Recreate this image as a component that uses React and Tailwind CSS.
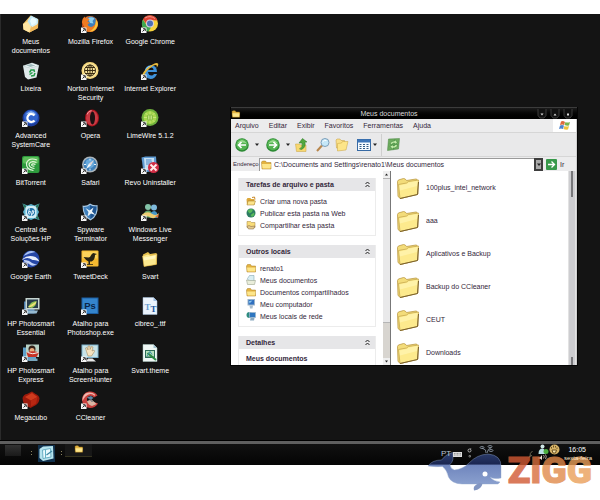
const Arrow = () => (
  <g>
    <rect x="0" y="25" width="11" height="11" fill="#f4f4f4" />
    <path d="M3 33 L7 29 M4 27.5 H8.5 V32" fill="none" stroke="#111" strokeWidth="1.8" />
  </g>
);

const FolderShape = () => (
  <>
    <path d="M4 9 L14 4 L18 8 L31 6 L32 29 L6 33 Z" fill="#e9c24c" />
    <path d="M3 12 L14 8 L19 11 L32 8 L30 29 L6 33 Z" fill="#fce98f" stroke="#d6ab3c" strokeWidth="1" />
    <path d="M5 15 L29 11 L28 17 L6 21 Z" fill="#fff6bd" />
  </>
);

const drawings = {
  docs: (
    <>
      <path d="M2 18 L17 1 L33 9 L32 26 L15 35 L3 29 Z" fill="#f5c766" />
      <path d="M11 12 L18 1 L32 8 L32 22 L20 32 L14 24 Z" fill="#bfe6f5" />
      <path d="M16 12 L20 5 L29 9 L29 19 L20 23 Z" fill="#e9fafd" />
      <path d="M2 18 L11 13 L18 23 L15 35 L3 29 Z" fill="#ffe6a2" />
      <path d="M18 23 L32 17 L32 26 L15 35 Z" fill="#f2b95a" />
      <path d="M20 21 L30 15 L30 19 L19 25 Z" fill="#d4eef3" />
    </>
  ),
  firefox: (
    <>
      <circle cx="18" cy="18" r="16" fill="#e8742a" />
      <circle cx="20" cy="14" r="11" fill="#3d7fbd" />
      <path d="M14 7 Q20 2 27 7 L23 12 L25 17 L18 16 Z" fill="#8fd0ee" />
      <path d="M2 14 Q3 6 7 3 L9 8 Q14 5 17 9 L13 13 L18 16 Q12 18 14 21 Q20 27 27 20 Q31 15 29 7 Q37 17 31 27 Q24 36 13 33 Q1 28 2 14 Z" fill="#ef7b22" />
      <path d="M30 9 Q37 18 30 27 Q25 34 17 33 Q28 28 29 18 Z" fill="#fbc73b" />
      <path d="M3 15 Q5 27 14 31 Q5 30 2 19 Z" fill="#b53c17" />
    </>
  ),
  chrome: (
    <>
      <circle cx="18" cy="17" r="16" fill="#f7d33c" />
      <path d="M4 9 A16 16 0 0 1 33 11 L18 10 L11 18 Z" fill="#dc4234" />
      <path d="M4 9 L12 22 L20 25 L15 33 A16 16 0 0 1 4 9 Z" fill="#3fa650" />
      <circle cx="18" cy="17" r="8" fill="#d9cfe0" />
      <circle cx="18" cy="17" r="6" fill="#4d6fb4" />
      <path d="M8 6 Q18 0 28 7" stroke="#f39a8c" strokeWidth="2" fill="none" />
    </>
  ),
  bin: (
    <>
      <path d="M2 8 L20 2 L34 7 L29 31 L12 35 L6 30 Z" fill="#dfe9ea" />
      <path d="M2 8 L20 2 L34 7 L17 12 Z" fill="#f8ffff" stroke="#a6babd" strokeWidth="1" />
      <path d="M8 7 L18 4 L27 7 L17 10 Z" fill="#9fb9bb" />
      <path d="M15 21 L18 16 L24 16 L25 20 M26 22 L24 27 L18 28 M15 25 L21 21" stroke="#239a48" strokeWidth="3" fill="none" />
    </>
  ),
  norton: (
    <>
      <circle cx="18" cy="17" r="17" fill="#f5d77d" />
      <circle cx="18" cy="17" r="14" fill="#fbe7a0" />
      <g fill="none" stroke="#3a2c12" strokeWidth="2">
        <circle cx="18" cy="17" r="11" />
        <ellipse cx="18" cy="17" rx="5" ry="11" />
        <path d="M18 6 V28 M7 17 H29 M9 11 H27 M9 23 H27" />
      </g>
    </>
  ),
  ie: (
    <>
      <path d="M32 20 H14 Q15 27 21 27 Q24 27 26 24 H32 Q28 34 19 34 Q7 32 7 20 Q8 7 20 6 Q32 7 32 20 Z M14 16 H25 Q25 11 20 11 Q15 11 14 16 Z" fill="#3f93dc" fillRule="evenodd" />
      <path d="M10 15 Q13 8 22 8" stroke="#a8dcfb" strokeWidth="2" fill="none" />
      <path d="M4 30 Q-1 24 13 12 Q30 -1 34 3 Q36 6 31 12 Q33 6 29 6 Q22 7 11 19 Q5 26 8 30 Z" fill="#e7b93c" />
    </>
  ),
  asc: (
    <>
      <circle cx="18" cy="18" r="17" fill="#1c3d9d" />
      <circle cx="18" cy="16" r="14" fill="#3264cd" />
      <path d="M7 11 Q18 -3 29 11 Q18 8 7 11 Z" fill="#86aeee" />
      <path d="M25 13 A8 8 0 1 0 25 23" stroke="#fff" strokeWidth="4.5" fill="none" />
    </>
  ),
  opera: (
    <>
      <ellipse cx="22" cy="18" rx="14" ry="17" fill="#a80f1a" />
      <ellipse cx="22" cy="18" rx="12" ry="15" fill="#c93b44" />
      <ellipse cx="23" cy="18" rx="5" ry="13" fill="#1b1112" />
      <path d="M12 11 Q14 4 21 3" stroke="#f5a0a4" strokeWidth="2" fill="none" />
    </>
  ),
  lime: (
    <>
      <circle cx="18" cy="17" r="17" fill="#6fb03d" />
      <circle cx="18" cy="17" r="13" fill="#a6d64d" />
      <g stroke="#c8e67c" strokeWidth="2">
        <path d="M18 5 V29 M6 17 H30 M9 8 L27 26 M27 8 L9 26" />
      </g>
      <rect x="12" y="11" width="12" height="12" rx="3" fill="#86bd42" />
      <path d="M15 13 V21 M18 13 V21 M21 13 V21" stroke="#e4f5a8" strokeWidth="1.2" />
    </>
  ),
  bittorrent: (
    <>
      <rect x="0" y="0" width="35" height="34" rx="4" fill="#2d9b3d" />
      <rect x="2" y="2" width="31" height="13" rx="3" fill="#5cbd59" />
      <path d="M30 8 Q14 2 9 14 Q8 27 23 29 M29 13 Q18 8 14 16 Q14 24 25 25 M27 17 Q21 14 19 18 Q21 21 25 20" stroke="#e6f8de" strokeWidth="2.4" fill="none" />
    </>
  ),
  safari: (
    <>
      <circle cx="18" cy="17" r="16" fill="#aab4bb" />
      <circle cx="18" cy="17" r="13" fill="#3d7fb9" />
      <circle cx="18" cy="15" r="9" fill="#68a9dc" />
      <path d="M18 5 V9 M18 25 V29 M6 17 H10 M26 17 H30" stroke="#e3f1fb" strokeWidth="2" />
      <path d="M26 8 L20 19 L16 15 Z" fill="#e0d5d8" />
      <path d="M10 26 L16 15 L20 19 Z" fill="#f2f6f8" />
    </>
  ),
  revo: (
    <>
      <path d="M1 3 L9 1 H30 L32 29 L5 33 Z" fill="#5f9bd3" />
      <path d="M6 4 H26 V28 H8 Z" fill="#c5e0f4" />
      <path d="M10 8 H21 M10 12 H22 M10 16 H18" stroke="#4a87c4" strokeWidth="2" />
      <circle cx="25" cy="23" r="11" fill="#d12d45" />
      <path d="M19 17 L31 29 M31 17 L19 29" stroke="#ffe9e9" strokeWidth="4" />
    </>
  ),
  hp: (
    <>
      <path d="M1 1 L11 5 L18 2 L25 5 L35 1 L31 12 L34 18 L31 24 L35 34 L25 31 L18 34 L11 31 L1 34 L5 24 L2 18 L5 12 Z" fill="#5fb5cf" />
      <path d="M1 1 L9 6 L6 12 Z M35 1 L27 6 L30 12 Z M35 34 L27 30 L30 24 Z" fill="#2c755a" />
      <rect x="7" y="6" width="22" height="24" rx="5" fill="#d0edf6" />
      <circle cx="18" cy="18" r="8" fill="#1c6fa6" />
      <path d="M15 11 L12 23 M14 17 H17 L15 23 M21 15 L18 27 M20 16 H24 L22 22 H19" stroke="#eef9ff" strokeWidth="1.8" fill="none" />
    </>
  ),
  spyware: (
    <>
      <path d="M3 5 Q11 7 18 1 Q25 6 33 4 Q36 26 19 35 Q3 28 3 5 Z" fill="#a9c8e2" />
      <path d="M5 8 Q12 9 18 4 Q24 8 31 7 Q32 24 19 32 Q6 26 5 8 Z" fill="#3f80bd" />
      <path d="M18 4 Q24 8 31 7 Q32 24 19 32 Z" fill="#1f5591" />
      <path d="M9 10 L17 15 L25 9 L22 17 L29 24 L20 21 L13 27 L15 18 Z" fill="#eef6fb" />
    </>
  ),
  messenger: (
    <>
      <circle cx="14" cy="8" r="6" fill="#83c3a7" />
      <circle cx="26" cy="9" r="6" fill="#7eb9dc" />
      <path d="M5 28 Q5 14 15 15 Q23 15 23 30 Z" fill="#5fa26a" />
      <path d="M17 29 Q18 16 27 16 Q34 17 33 30 Z" fill="#4595c6" />
      <path d="M2 23 Q12 15 21 21 Q29 27 36 20 Q30 34 19 29 Q11 24 4 30 Z" fill="#eecd74" />
      <path d="M28 26 Q34 25 36 21 L34 30 Z" fill="#dc713d" />
    </>
  ),
  earth: (
    <>
      <circle cx="18" cy="18" r="17" fill="#2647a7" />
      <path d="M3 12 Q13 -2 27 4 Q14 6 3 12 Z" fill="#a9c2f4" />
      <path d="M1 18 Q12 8 27 14 Q33 18 35 23 Q28 19 21 20 Q10 12 1 20 Z" fill="#eaf0fd" />
      <path d="M4 20 Q14 20 20 26 Q27 30 32 27 Q22 35 14 28 Q9 23 4 23 Z" fill="#c3d3f7" />
    </>
  ),
  tweetdeck: (
    <>
      <rect x="1" y="1" width="34" height="32" rx="2" fill="#f4b931" />
      <rect x="3" y="3" width="30" height="14" fill="#fbd35b" />
      <path d="M5 14 L15 15 Q19 14 21 9 Q24 4 28 7 L32 8 L28 10 Q28 20 21 23 L18 23 V29 H15 V23 Q10 21 5 14 Z" fill="#272313" />
      <path d="M12 29 H24" stroke="#272313" strokeWidth="1.5" />
    </>
  ),
  folder: <FolderShape />,
  photosmart: (
    <>
      <rect x="4" y="9" width="21" height="24" fill="#487bad" />
      <rect x="7" y="2" width="28" height="23" fill="#c7d6d1" />
      <rect x="10" y="5" width="22" height="17" fill="#293c4c" />
      <path d="M12 20 Q18 8 29 8 Q29 18 20 22 Z" fill="#8cc254" />
      <path d="M12 20 Q20 14 29 9 L27 14 Q20 20 15 21 Z" fill="#f1e078" />
      <path d="M8 27 H32 L29 33 H8 Z" fill="#96bad0" />
    </>
  ),
  photoshop: (
    <>
      <rect x="1" y="1" width="34" height="33" fill="#1c5fa3" />
      <rect x="3" y="3" width="30" height="29" fill="#3585cd" />
      <text x="18" y="24" textAnchor="middle" fontSize="19" fontWeight="700" fill="#0b2548" fontFamily="Liberation Sans, sans-serif">Ps</text>
    </>
  ),
  font: (
    <>
      <path d="M4 1 H25 L32 8 V35 H4 Z" fill="#eaf3fc" stroke="#a5bfdd" />
      <path d="M25 1 L32 8 H25 Z" fill="#9fbfe4" />
      <text x="7" y="25" fontSize="18" fontWeight="700" fill="#1f58a2" fontFamily="Liberation Serif, serif">
        <tspan fill="#6b9bd0">T</tspan>
        <tspan dy="5">T</tspan>
      </text>
    </>
  ),
  express: (
    <>
      <rect x="2" y="7" width="26" height="26" fill="#5fa1cb" />
      <rect x="8" y="1" width="26" height="25" fill="#b7d1c6" />
      <circle cx="20" cy="10" r="7" fill="#352118" />
      <circle cx="20" cy="13" r="5" fill="#e9ad80" />
      <path d="M9 17 Q21 12 34 17 L29 26 H12 Z" fill="#c63226" />
      <path d="M11 17 Q21 22 33 17" stroke="#f5f5f0" strokeWidth="2" fill="none" />
      <path d="M13 29 H31 V34 H13 Z" fill="#79a6bd" />
    </>
  ),
  hunter: (
    <>
      <rect x="1" y="1" width="34" height="27" fill="#7db2cc" />
      <rect x="3" y="3" width="30" height="23" fill="#c8e3e8" />
      <path d="M11 15 L9 8 L12 7 L14 12 L14 4 L18 4 L18 11 L21 5 L24 6 L22 14 L26 12 L27 15 L21 24 H14 Z" fill="#f5e3c0" stroke="#987a4e" />
      <path d="M14 29 H23 L30 35 H10 Z" fill="#e8e8e8" />
    </>
  ),
  theme: (
    <>
      <path d="M4 1 H25 L32 8 V35 H4 Z" fill="#eff7f5" stroke="#aac8c0" />
      <path d="M25 1 L32 8 H25 Z" fill="#a2c3d1" />
      <rect x="8" y="12" width="20" height="16" fill="#2c6b57" />
      <rect x="10" y="14" width="16" height="11" fill="#b6e2bd" />
      <path d="M13 18 L30 32" stroke="#2b8b42" strokeWidth="4" />
      <path d="M12 24 L18 15 L22 21" stroke="#3a88a5" strokeWidth="2" fill="none" />
    </>
  ),
  megacubo: (
    <>
      <path d="M1 14 Q4 6 10 6 L20 1 L27 6 Q34 8 35 15 Q34 24 28 28 L17 34 L6 28 Q1 22 1 14 Z" fill="#9c1a0c" />
      <path d="M6 12 L20 4 L31 12 L18 19 Z" fill="#cf3b1e" />
      <path d="M18 19 L31 12 L28 25 L18 31 Z" fill="#b72712" />
    </>
  ),
  ccleaner: (
    <>
      <path d="M33 9 Q27 0 16 1 Q2 4 2 18 Q3 33 18 34 Q28 34 34 25 L26 22 Q21 28 15 24 Q9 18 14 12 Q20 7 26 13 Z" fill="#c9403d" />
      <path d="M28 7 Q20 0 9 5 Q2 11 3 20 Q8 8 19 6 Q24 6 27 10 Z" fill="#f0b4ac" />
      <path d="M12 13 L20 10 L25 14 L19 18 Z" fill="#5d86a5" />
      <path d="M12 20 L21 17 L31 26 L22 30 Q14 28 12 20 Z" fill="#d9b6a4" />
      <path d="M16 15 L23 22" stroke="#44596b" strokeWidth="2" />
    </>
  ),
};

const shortcuts = [
  { icon: "docs", label: "Meus\ndocumentos", plain: true },
  { icon: "firefox", label: "Mozilla Firefox" },
  { icon: "chrome", label: "Google Chrome" },
  { icon: "bin", label: "Lixeira", plain: true },
  { icon: "norton", label: "Norton Internet Security" },
  { icon: "ie", label: "Internet Explorer" },
  { icon: "asc", label: "Advanced SystemCare" },
  { icon: "opera", label: "Opera" },
  { icon: "lime", label: "LimeWire 5.1.2" },
  { icon: "bittorrent", label: "BitTorrent" },
  { icon: "safari", label: "Safari" },
  { icon: "revo", label: "Revo Uninstaller" },
  { icon: "hp", label: "Central de Soluções HP" },
  { icon: "spyware", label: "Spyware Terminator" },
  { icon: "messenger", label: "Windows Live Messenger" },
  { icon: "earth", label: "Google Earth" },
  { icon: "tweetdeck", label: "TweetDeck" },
  { icon: "folder", label: "Svart", plain: true },
  { icon: "photosmart", label: "HP Photosmart Essential" },
  { icon: "photoshop", label: "Atalho para Photoshop.exe" },
  { icon: "font", label: "cibreo_.ttf", plain: true },
  { icon: "express", label: "HP Photosmart Express" },
  { icon: "hunter", label: "Atalho para ScreenHunter" },
  { icon: "theme", label: "Svart.theme", plain: true },
  { icon: "megacubo", label: "Megacubo" },
  { icon: "ccleaner", label: "CCleaner" },
];

const Shortcut = ({ icon, label, plain }) => (
  <button className="flex h-[47px] flex-col items-center gap-1 text-[7px] leading-[9px] whitespace-pre-line text-white">
    <svg viewBox="0 0 36 36" className="h-[18px] w-[18px] shrink-0">
      {drawings[icon]}
      {!plain && <Arrow />}
    </svg>
    <span>{label}</span>
  </button>
);

const SmallFolder = ({ className = "h-[10px] w-[11px]" }) => (
  <svg viewBox="0 0 22 20" className={`shrink-0 ${className}`}>
    <path d="M1 4 L3 2 H9 L11 5 H20 V18 H2 Z" fill="#e3b341" stroke="#a87d22" />
    <path d="M2 8 H20 L19 17 H3 Z" fill="#fde68b" />
  </svg>
);

const BigFolder = () => (
  <svg viewBox="0 0 44 44" className="h-[22px] w-[22px] shrink-0">
    <path d="M1 9 Q2 5 6 5 L13 3 Q17 3 19 7 L38 4 Q41 4 41 8 L42 34 L7 43 L2 39 Z" fill="#f3dc7a" stroke="#b8963f" strokeWidth="1.5" />
    <path d="M3 15 L19 12 L23 9 L43 6 L41 35 L6 43 Z" fill="#fdea8d" stroke="#c3a44c" strokeWidth="1.5" />
    <path d="M5 17 L20 14 L24 11 L41 8 L40 18 L6 27 Z" fill="#fff2a8" />
    <path d="M6 43 L41 35 L43 10" stroke="#79602d" strokeWidth="2" fill="none" />
  </svg>
);

const NavCircle = ({ flip }) => (
  <svg viewBox="0 0 28 28" className="h-[14px] w-[14px]">
    <circle cx="14" cy="14" r="13.5" fill="#2b8a33" />
    <circle cx="14" cy="13" r="11.5" fill="#54b352" />
    <path d="M4 11 Q14 -3 24 11 Q14 7 4 11 Z" fill="#9adb8f" />
    <path d={flip ? "M6 14 H21 M15 8 L21 14 L15 20" : "M22 14 H7 M13 8 L7 14 L13 20"} stroke="#fff" strokeWidth="3.4" fill="none" />
  </svg>
);

const Caret = () => (
  <svg viewBox="0 0 8 6" className="h-[3px] w-1">
    <path d="M0 1 H8 L4 6 Z" fill="#222" />
  </svg>
);

const taskIcons = {
  create: (
    <>
      <path d="M1 7 L3 4 H9 L10 6 H17 V18 H2 Z" fill="#dca83a" />
      <path d="M4 10 H19 L16 18 H2 Z" fill="#fce48b" stroke="#9c772b" />
      <path d="M12 3 L17 2 L18 7" stroke="#c98a2c" strokeWidth="2" fill="none" />
    </>
  ),
  web: (
    <>
      <circle cx="10" cy="10" r="9" fill="#2c7c62" />
      <path d="M3 6 Q8 0 14 3 L12 8 L7 11 Z M9 14 L16 9 L17 14 L12 18 Z" fill="#58b95b" />
    </>
  ),
  share: (
    <>
      <path d="M2 3 H9 L11 5 H18 V15 H2 Z" fill="#f8dc79" stroke="#a4813a" />
      <path d="M2 13 Q6 9 10 13 L18 12 L15 18 H5 Z" fill="#e4cb8e" stroke="#7b5b3b" />
    </>
  ),
  folder: (
    <>
      <path d="M1 6 L3 3 H9 L11 6 H19 V18 H2 Z" fill="#e3b341" stroke="#a87d22" />
      <path d="M2 9 H19 L18 17 H3 Z" fill="#fde68b" />
    </>
  ),
  docs: (
    <>
      <path d="M3 7 L7 1 H16 V13 H5 Z" fill="#d8eef4" stroke="#7298a6" />
      <path d="M1 10 L8 11 H19 L17 19 H3 Z" fill="#e9edda" stroke="#8c977f" />
    </>
  ),
  computer: (
    <>
      <rect x="4" y="1" width="13" height="11" fill="#2f6fbf" stroke="#9bb4ca" strokeWidth="2" />
      <path d="M7 13 H14 L13 19 H8 Z" fill="#a8bccb" />
      <path d="M6 4 L13 3 L7 9 Z" fill="#8dc8ef" />
    </>
  ),
  network: (
    <>
      <circle cx="7" cy="8" r="6" fill="#2e8c80" />
      <rect x="7" y="3" width="12" height="10" fill="#2d76c0" stroke="#9cb8cd" strokeWidth="1.5" />
      <path d="M9 14 H17 L16 19 H8 Z" fill="#8aa9bf" />
    </>
  ),
};

const panels = [
  {
    title: "Tarefas de arquivo e pasta",
    items: [
      ["create", "Criar uma nova pasta"],
      ["web", "Publicar esta pasta na Web"],
      ["share", "Compartilhar esta pasta"],
    ],
  },
  {
    title: "Outros locais",
    items: [
      ["folder", "renato1"],
      ["docs", "Meus documentos"],
      ["folder", "Documentos compartilhados"],
      ["computer", "Meu computador"],
      ["network", "Meus locais de rede"],
    ],
  },
  { title: "Detalhes", items: [], note: "Meus documentos" },
];

const Panel = ({ title, items, note }) => (
  <section className="border-x border-b border-[#ececec]">
    <h2 className="flex h-[13px] items-center justify-between bg-[#e6e6e8] pr-[5px] pl-[7px] font-bold">
      {title}
      <button aria-label={title}>
        <svg viewBox="0 0 10 14" className="h-[7px] w-[5px]">
          <path d="M1 6 L5 2 L9 6 M1 12 L5 8 L9 12" fill="none" stroke="#222" strokeWidth="2" />
        </svg>
      </button>
    </h2>
    <div className="py-1 pl-[7px]">
      {items.map(([icon, text]) => (
        <a key={text} href="#" className="flex h-3 items-center gap-1">
          <svg viewBox="0 0 20 20" className="h-[10px] w-[10px] shrink-0">{taskIcons[icon]}</svg>
          {text}
        </a>
      ))}
      {note && <p className="h-3 pt-px font-bold">{note}</p>}
    </div>
  </section>
);

const menus = ["Arquivo", "Editar", "Exibir", "Favoritos", "Ferramentas", "Ajuda"];
const folders = ["100plus_intel_network", "aaa", "Aplicativos e Backup", "Backup do CCleaner", "CEUT", "Downloads"];
const controls = [
  ["Minimizar", "M7 9 H13 L10 13 Z"],
  ["Maximizar", "M7 13 H13 L10 9 Z"],
  ["Fechar", "M8 9 H12 V13 H8 Z"],
];

const TitleBar = () => (
  <header className="flex h-3 items-center border-t border-[#3c3c3c] bg-linear-to-b from-[#1c1c1c] to-black">
    <SmallFolder className="h-2 w-[10px]" />
    <h1 className="flex-1 text-center text-[#dcdcdc]">Meus documentos</h1>
    <div className="flex gap-[3px] pr-1">
      {controls.map(([name, d]) => (
        <button key={name} aria-label={name}>
          <svg viewBox="0 0 20 20" className="h-[10px] w-[10px]">
            <path d="M2 0 V13 L6 18 H14 L18 13 V0" fill="#111" stroke="#4c4c4c" strokeWidth="1.5" />
            <path d={d} fill="#ddd" />
          </svg>
        </button>
      ))}
    </div>
  </header>
);

const Toolbar = () => (
  <div className="flex h-6 items-center border-b border-[#d6d6d6] bg-[#e9e9ea] pl-1">
    <button aria-label="Voltar" className="mr-[6px]"><NavCircle /></button>
    <Caret />
    <button aria-label="Avançar" className="mr-[6px] ml-[7px]"><NavCircle flip /></button>
    <Caret />
    <button aria-label="Acima" className="ml-[5px]">
      <svg viewBox="0 0 26 28" className="h-[14px] w-[13px]">
        <path d="M1 12 H9 L11 14 H22 V27 H3 Z" fill="#f7d871" stroke="#c9a23f" />
        <path d="M9 22 Q16 18 14 10 H8 L15 1 L24 8 H20 Q22 19 13 23 Z" fill="#51a83f" stroke="#2b7827" />
      </svg>
    </button>
    <button aria-label="Pesquisar" className="ml-2">
      <svg viewBox="0 0 28 28" className="h-[14px] w-[14px]">
        <path d="M2 26 L12 15" stroke="#b8874d" strokeWidth="4" />
        <circle cx="18" cy="9" r="8" fill="#c5e7f8" stroke="#7d9eb9" strokeWidth="2" />
        <path d="M13 8 Q16 3 21 5" stroke="#fff" strokeWidth="2" fill="none" />
      </svg>
    </button>
    <button aria-label="Pastas" className="ml-[5px]">
      <svg viewBox="0 0 28 28" className="h-[14px] w-[14px]">
        <path d="M2 4 L4 2 H10 L12 5 H19 V20 H3 Z" fill="#fae08a" stroke="#c29b3d" />
        <path d="M5 11 L13 10 L15 7 H26 L22 24 L5 26 Z" fill="#fde589" stroke="#c9a23f" />
      </svg>
    </button>
    <button aria-label="Modos de exibição" className="ml-2 flex items-center gap-[2px]">
      <svg viewBox="0 0 28 24" className="h-3 w-[14px]">
        <rect x="1" y="1" width="26" height="22" fill="#f5faff" stroke="#376aa4" strokeWidth="2" />
        <rect x="1" y="1" width="26" height="6" fill="#3d75b8" />
        <path d="M5 11 H9 M12 11 H16 M19 11 H23 M5 15 H9 M12 15 H16 M19 15 H23 M5 19 H9 M12 19 H16 M19 19 H23" stroke="#315a85" strokeWidth="2" />
      </svg>
      <Caret />
    </button>
    <span className="ml-1 h-[22px] w-px bg-[#cfcfcf]" />
    <button aria-label="Atualizar" className="ml-[5px]">
      <svg viewBox="0 0 26 26" className="h-[13px] w-[13px]">
        <path d="M3 2 L25 1 L23 22 L1 25 Z" fill="#6dab5f" stroke="#4b8442" />
        <path d="M6 12 Q8 5 15 6 L16 3 L21 9 L15 13 V10 Q11 9 10 13 Z M21 13 Q20 21 12 20 V23 L6 17 L12 13 V16 Q16 16 17 13 Z" fill="#c3eba9" stroke="#2b7a2c" />
      </svg>
    </button>
  </div>
);

const AddressBar = () => (
  <form className="flex h-[14px] items-center bg-[#ececed] pl-[2px]">
    <label htmlFor="address" className="w-[26px] text-[6px]">Endereço</label>
    <div className="flex h-[13px] flex-1 items-center gap-[2px] border-t border-l border-[#9a9a9a] bg-white pl-px">
      <SmallFolder />
      <input
        id="address"
        className="min-w-0 flex-1 outline-none"
        defaultValue="C:\Documents and Settings\renato1\Meus documentos"
      />
      <button type="button" aria-label="Histórico" className="flex h-[13px] w-[9px] items-center justify-center border-2 border-[#3d3d3d] bg-[#a9a9a9]">
        <Caret />
      </button>
    </div>
    <button type="button" className="flex w-[33px] items-center gap-[3px] pl-[3px]">
      <svg viewBox="0 0 22 22" className="h-[11px] w-[11px]">
        <rect width="22" height="22" rx="2" fill="#37994a" />
        <path d="M4 11 H17 M11 5 L17 11 L11 17" stroke="#fff" strokeWidth="2.6" fill="none" />
      </svg>
      Ir
    </button>
  </form>
);

const ScrollArrow = ({ d }) => (
  <svg viewBox="0 0 14 14" className="h-[7px] w-[7px] bg-[#efefef]">
    <path d={d} fill="#222" />
  </svg>
);

const ExplorerWindow = () => (
  <main className="mt-[92px] mr-[22px] ml-[50px] flex-1 self-start border border-t-0 border-[#050505] bg-white text-[7px] leading-[9px] text-[#33263a]">
    <TitleBar />
    <div className="border-r border-[#cfcfcf]">
      <nav className="flex h-[14px] items-stretch border-b border-[#d6d6d6] bg-[#ececed]">
        <div className="flex flex-1 items-center gap-[10px] pl-1">
          {menus.map((m) => (
            <button key={m}>{m}</button>
          ))}
        </div>
        <div className="flex w-[23px] items-center justify-center bg-white">
          <svg viewBox="0 0 24 22" className="h-[11px] w-3">
            <path d="M4 3 Q8 1 12 4 L10 10 Q7 8 2 10 Z" fill="#de6a3c" />
            <path d="M13 4 Q17 6 22 4 L20 11 Q16 12 11 10 Z" fill="#7ab54c" />
            <path d="M2 11 Q6 9 10 11 L8 18 Q4 16 0 18 Z" fill="#4e83cc" />
            <path d="M11 12 Q15 14 20 12 L18 19 Q13 20 9 18 Z" fill="#f0c23c" />
          </svg>
        </div>
      </nav>
      <Toolbar />
      <AddressBar />
      <div className="flex h-[194px] overflow-hidden">
        <aside className="flex w-[145px] shrink-0 flex-col gap-[9px] pt-[7px] pl-[7px]">
          {panels.map((p) => (
            <Panel key={p.title} {...p} />
          ))}
        </aside>
        <div className="ml-[7px] flex w-2 shrink-0 flex-col border-r border-[#777] bg-[#d8d5d0]">
          <ScrollArrow d="M4 9 H10 L7 5 Z" />
          <span className="h-[145px] border-y border-[#b5b5b5] bg-[#e9e9ea]" />
          <span className="flex-1" />
          <ScrollArrow d="M4 5 H10 L7 9 Z" />
        </div>
        <ul className="flex-1 pl-[6px]">
          {folders.map((name) => (
            <li key={name} className="flex h-[33px] items-center gap-[7px]">
              <BigFolder />
              {name}
            </li>
          ))}
        </ul>
        <div className="flex w-2 flex-col items-center justify-between border-x border-[#e2e2e2] bg-[#cdcdd0]">
          <span className="h-[26px] w-[2px] bg-[#77777a]" />
          <span className="h-2 w-[2px] bg-[#77777a]" />
        </div>
      </div>
    </div>
  </main>
);

const Grip = () => (
  <span className="flex flex-col gap-[2px]">
    <i className="h-px w-px bg-[#8c8460]" />
    <i className="h-px w-px bg-[#8c8460]" />
  </span>
);

const Taskbar = () => (
  <footer className="flex h-[25px] items-start border-t border-black bg-linear-to-b from-[#131313] to-[#050505]">
    <div className="flex h-6 flex-1 items-start border-t-3 border-[#5f5f5f]">
      <button aria-label="Iniciar" className="mt-px ml-[5px] h-[11px] w-4 bg-linear-to-b from-[#333] to-[#1a1a1a]" />
      <div className="ml-[10px] flex h-[18px] items-center gap-[6px]">
        <Grip />
        <button aria-label="Mostrar área de trabalho">
          <svg viewBox="0 0 34 34" className="h-[17px] w-[17px]">
            <rect width="34" height="34" fill="#10304c" />
            <path d="M3 8 L10 3 L30 2 L31 27 L10 32 L3 26 Z" fill="#b5e3ee" />
            <path d="M9 10 L25 7 L26 24 L10 27 Z" fill="#e9fbff" stroke="#6aafc4" strokeWidth="2" />
            <path d="M17 20 L28 12" stroke="#3f88a3" strokeWidth="2.5" />
            <path d="M15 10 V26" stroke="#63b2c7" strokeWidth="2" />
          </svg>
        </button>
        <Grip />
      </div>
      <button aria-label="Meus documentos" className="ml-[3px] flex h-[13px] w-[27px] justify-center border-b border-[#34321f] bg-[#171717]">
        <SmallFolder className="mt-px h-2 w-[10px]" />
      </button>
    </div>
  </footer>
);

const Watermark = () => (
  <div className="absolute top-[431px] right-[8px] flex w-[164px] items-start justify-between">
    <svg viewBox="0 0 150 92" className="h-[46px] w-[75px]" role="img" aria-label="baleia">
      <defs>
        <linearGradient id="whale" gradientUnits="userSpaceOnUse" x1="0" y1="0" x2="0" y2="92">
          <stop offset="0.2" stopColor="#2a3a68" />
          <stop offset="0.42" stopColor="#1a2550" />
          <stop offset="0.43" stopColor="#6f85bd" />
          <stop offset="1" stopColor="#93a9d4" />
        </linearGradient>
      </defs>
      <path d="M49 15 Q53 31 44 39 Q45 48 53 50 Q70 48 82 36 Q98 19 120 18 Q147 20 146 44 L146 66 Q132 69 124 64 Q131 73 144 74 L140 78 H68 Q47 77 41 64 Q38 50 29 43 Q16 44 0 42 Q8 30 27 30 Q34 19 49 15 Z" fill="url(#whale)" stroke="#91a7cd" strokeWidth="0.8" />
      <circle cx="114" cy="58" r="5" fill="#fff" />
      <path d="M103 76 Q88 81 92 91 Q107 89 109 77 Z" fill="#8296c2" />
      <g fill="none" stroke="#99a6b4" strokeWidth="1.5">
        <path d="M116 16 Q118 9 108 6 M118 16 Q119 7 127 5" />
        <ellipse cx="108" cy="5" rx="4" ry="2" />
        <ellipse cx="124" cy="3" rx="4" ry="2" />
        <ellipse cx="126" cy="11" rx="4" ry="2" />
      </g>
    </svg>
    <div aria-label="ZIGG" className="mt-[11px] font-[Roboto,sans-serif] text-[37px] leading-[30px] font-black opacity-80 [-webkit-text-stroke:1px]">
      <span className="text-[#d25933]">Z</span>
      <span className="text-[#d96e3c]">I</span>
      <span className="text-[#e18a4a]">G</span>
      <span className="text-[#ea9f59]">G</span>
    </div>
  </div>
);

const Tray = () => (
  <div className="absolute top-[430px] right-[8px] flex h-[21px] w-[158px] items-start text-[7px] leading-[9px] text-white">
    <span className="mt-[5px] ml-[7px] text-[8px] text-[#b9c2d4]">PT</span>
    <svg viewBox="0 0 18 10" className="mt-2 ml-[2px] h-[5px] w-[9px]">
      <rect width="18" height="10" fill="#ddd" />
      <path d="M2 3 H16 M2 6 H16" stroke="#555" strokeWidth="1" strokeDasharray="2 1" />
    </svg>
    <svg viewBox="0 0 10 20" className="mt-1 ml-[5px] h-[10px] w-[5px]">
      <circle cx="5" cy="5" r="3" fill="none" stroke="#ccc" strokeWidth="1.6" />
      <path d="M6 2 L9 0 M4 15 H7 V18 H4 Z" stroke="#ccc" />
    </svg>
    <svg viewBox="0 0 40 28" className="mt-[7px] ml-auto h-[14px] w-5 shrink-0">
      <path d="M9 0 Q3 4 4 11 M2 13 Q4 9 8 9" fill="none" stroke="#8a8468" strokeWidth="1.5" />
      <path d="M20 14 L24 13 L28 8 V18 L24 15 Z" fill="#f3e0d0" />
      <path d="M31 8 Q34 11 31 15 M35 7 Q38 11 35 16" fill="none" stroke="#e3d2c2" strokeWidth="1.5" />
    </svg>
    <div className="-ml-[10px] flex flex-col items-end">
      <div className="flex h-[10px] items-center">
        <svg viewBox="0 0 44 22" className="mr-2 h-[11px] w-[22px]">
          <circle cx="9" cy="5" r="4" fill="#cfe6e6" />
          <path d="M1 20 Q1 9 9 9 Q15 10 15 20 Z" fill="#b8dfe3" />
          <circle cx="16" cy="15" r="5" fill="#4cae3f" />
          <circle cx="33" cy="11" r="10" fill="#d8b568" />
          <path d="M27 9 V6 M31 7 V3 M35 7 V4 M38 10 V7 M28 12 H37 L35 18 H30 Z" stroke="#6d5223" strokeWidth="2" fill="#f6e4ac" />
        </svg>
        <time className="pr-[6px]">16:05</time>
      </div>
      <span className="text-[6px] leading-[8px] text-[#ffe9cf]">sexta-feira</span>
    </div>
  </div>
);

export default function App() {
  return (
    <div className="min-h-screen bg-white pt-[14px] font-['Liberation_Sans',Arial,sans-serif]">
      <div className="relative bg-[#141414]">
        <div className="flex border-l border-[#2b2b2b] pt-px pb-[2px]">
          <section className="grid w-[179px] shrink-0 grid-cols-3">
            {shortcuts.map((s) => (
              <Shortcut key={s.label} {...s} />
            ))}
          </section>
          <ExplorerWindow />
        </div>
        <Taskbar />
        <Watermark />
        <Tray />
      </div>
    </div>
  );
}
